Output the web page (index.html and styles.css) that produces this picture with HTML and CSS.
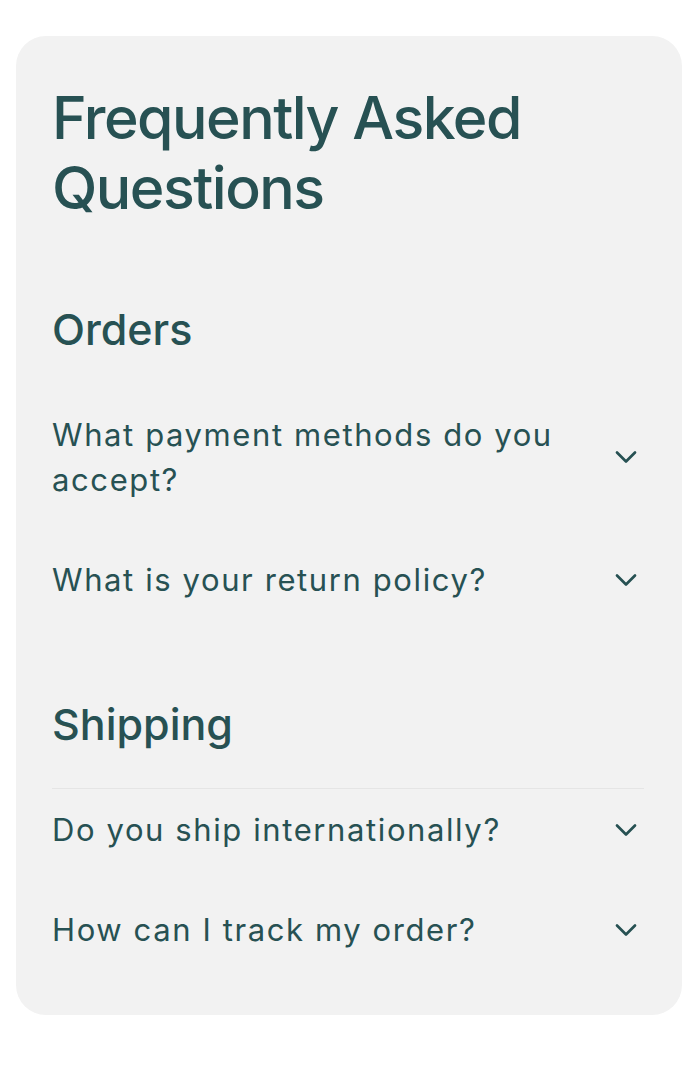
FILE: index.html
```html
<!DOCTYPE html>
<html lang="en">
<head>
    <meta charset="UTF-8">
    <meta name="viewport" content="width=device-width, initial-scale=1.0">
    <title>FAQ</title>
    <link rel="stylesheet" href="styles.css">
</head>
<body>
    <div class="faq-card">
        <h1>Frequently Asked Questions</h1>

        <section class="faq-section">
            <h2>Orders</h2>
            <div class="faq-list first">
                <div class="faq-item">
                    <span class="question">What payment methods do you accept?</span>
                    <svg class="chevron" viewBox="0 0 24 24"><path d="M6 9l6 6 6-6"/></svg>
                </div>
                <div class="faq-item">
                    <span class="question">What is your return policy?</span>
                    <svg class="chevron" viewBox="0 0 24 24"><path d="M6 9l6 6 6-6"/></svg>
                </div>
            </div>
        </section>

        <section class="faq-section">
            <h2>Shipping</h2>
            <div class="faq-list">
                <div class="faq-item">
                    <span class="question">Do you ship internationally?</span>
                    <svg class="chevron" viewBox="0 0 24 24"><path d="M6 9l6 6 6-6"/></svg>
                </div>
                <div class="faq-item">
                    <span class="question">How can I track my order?</span>
                    <svg class="chevron" viewBox="0 0 24 24"><path d="M6 9l6 6 6-6"/></svg>
                </div>
            </div>
        </section>
    </div>
</body>
</html>
```

FILE: styles.css
```css
body {
    font-family: Inter, "Noto Sans", sans-serif;
    margin: 0;
    padding: 36px 14px 52px 16px;
    background-color: #fff;
    color: #275153;
}
.faq-card {
    background: #f2f2f2;
    border-radius: 30px;
    padding: 47px 38px 26px 36px;
}
h1 {
    font-size: 59px;
    font-weight: 500;
    line-height: 70px;
    letter-spacing: -1.5px;
    margin: 0 0 78px;
}
.faq-section + .faq-section {
    margin-top: 57px;
}
h2 {
    font-size: 43px;
    font-weight: 500;
    line-height: 56px;
    margin: 0 0 36px;
}
.faq-list {
    border-top: 1px solid #e5e5e5;
}
.faq-list.first {
    border-top-color: transparent;
}
.faq-item {
    display: flex;
    align-items: center;
    justify-content: space-between;
    gap: 20px;
    padding: 18px 0 37px;
}
.question {
    font-size: 31px;
    line-height: 45px;
    letter-spacing: 1.6px;
    max-width: 560px;
}
.chevron {
    width: 36px;
    height: 36px;
    flex-shrink: 0;
    fill: none;
    stroke: #275153;
    stroke-width: 1.8;
    stroke-linecap: round;
    stroke-linejoin: round;
}
```
